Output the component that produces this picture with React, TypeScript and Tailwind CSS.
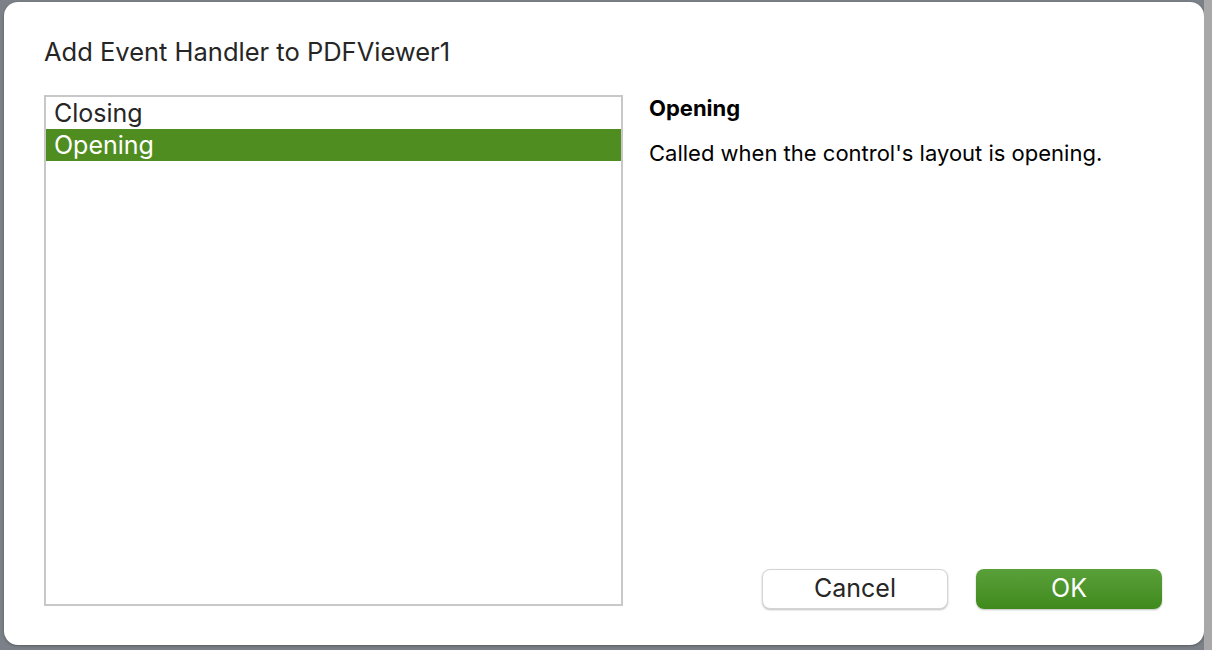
export default function App() {
  const events = ["Closing", "Opening"];
  const selected = "Opening";

  return (
    <div
      className="flex h-[650px] w-[1212px] bg-[#7c8088]"
      style={{ fontFamily: "Inter, 'Noto Sans', sans-serif" }}
    >
      <div className="flex flex-1 pb-[5px] pl-[4px] pt-[2px]">
        <div className="flex flex-1 flex-col rounded-[14px] bg-white px-[40px] pt-[34px] shadow-[0_1px_3px_rgba(0,0,0,0.3)]">
          <h1 className="text-[25.5px] leading-[32px] text-[#262626]">Add Event Handler to PDFViewer1</h1>
          <div className="mt-[27px] flex flex-1 pb-[39px]">
            <div className="w-[579px] border-2 border-[#c8c8c8] bg-white">
              {events.map((name) => (
                <div
                  key={name}
                  className={
                    name === selected
                      ? "h-[32px] bg-[#4f8d20] pl-[8px] text-[25px] leading-[32px] text-white"
                      : "h-[32px] pl-[8px] text-[25px] leading-[32px] text-[#262626]"
                  }
                >
                  {name}
                </div>
              ))}
            </div>
            <div className="flex flex-1 flex-col pl-[26px]">
              <p className="text-[22px] font-bold leading-[26px] text-black">Opening</p>
              <p className="mt-[19px] text-[22px] leading-[26px] text-black">
                Called when the control's layout is opening.
              </p>
              <div className="mb-[-3px] mt-auto flex justify-end gap-[28px] pr-[2px]">
                <button className="h-[40px] w-[186px] rounded-[8px] border border-[#d4d4d4] bg-white text-[25px] text-[#262626] shadow-[0_1px_2px_rgba(0,0,0,0.25)]">
                  Cancel
                </button>
                <button className="h-[40px] w-[186px] rounded-[8px] bg-gradient-to-b from-[#5aa03a] to-[#3f8a1b] text-[25px] text-white shadow-[0_1px_2px_rgba(0,0,0,0.25)]">
                  OK
                </button>
              </div>
            </div>
          </div>
        </div>
      </div>
      <div className="w-[8px] bg-[#a8a8a8]" />
    </div>
  );
}
